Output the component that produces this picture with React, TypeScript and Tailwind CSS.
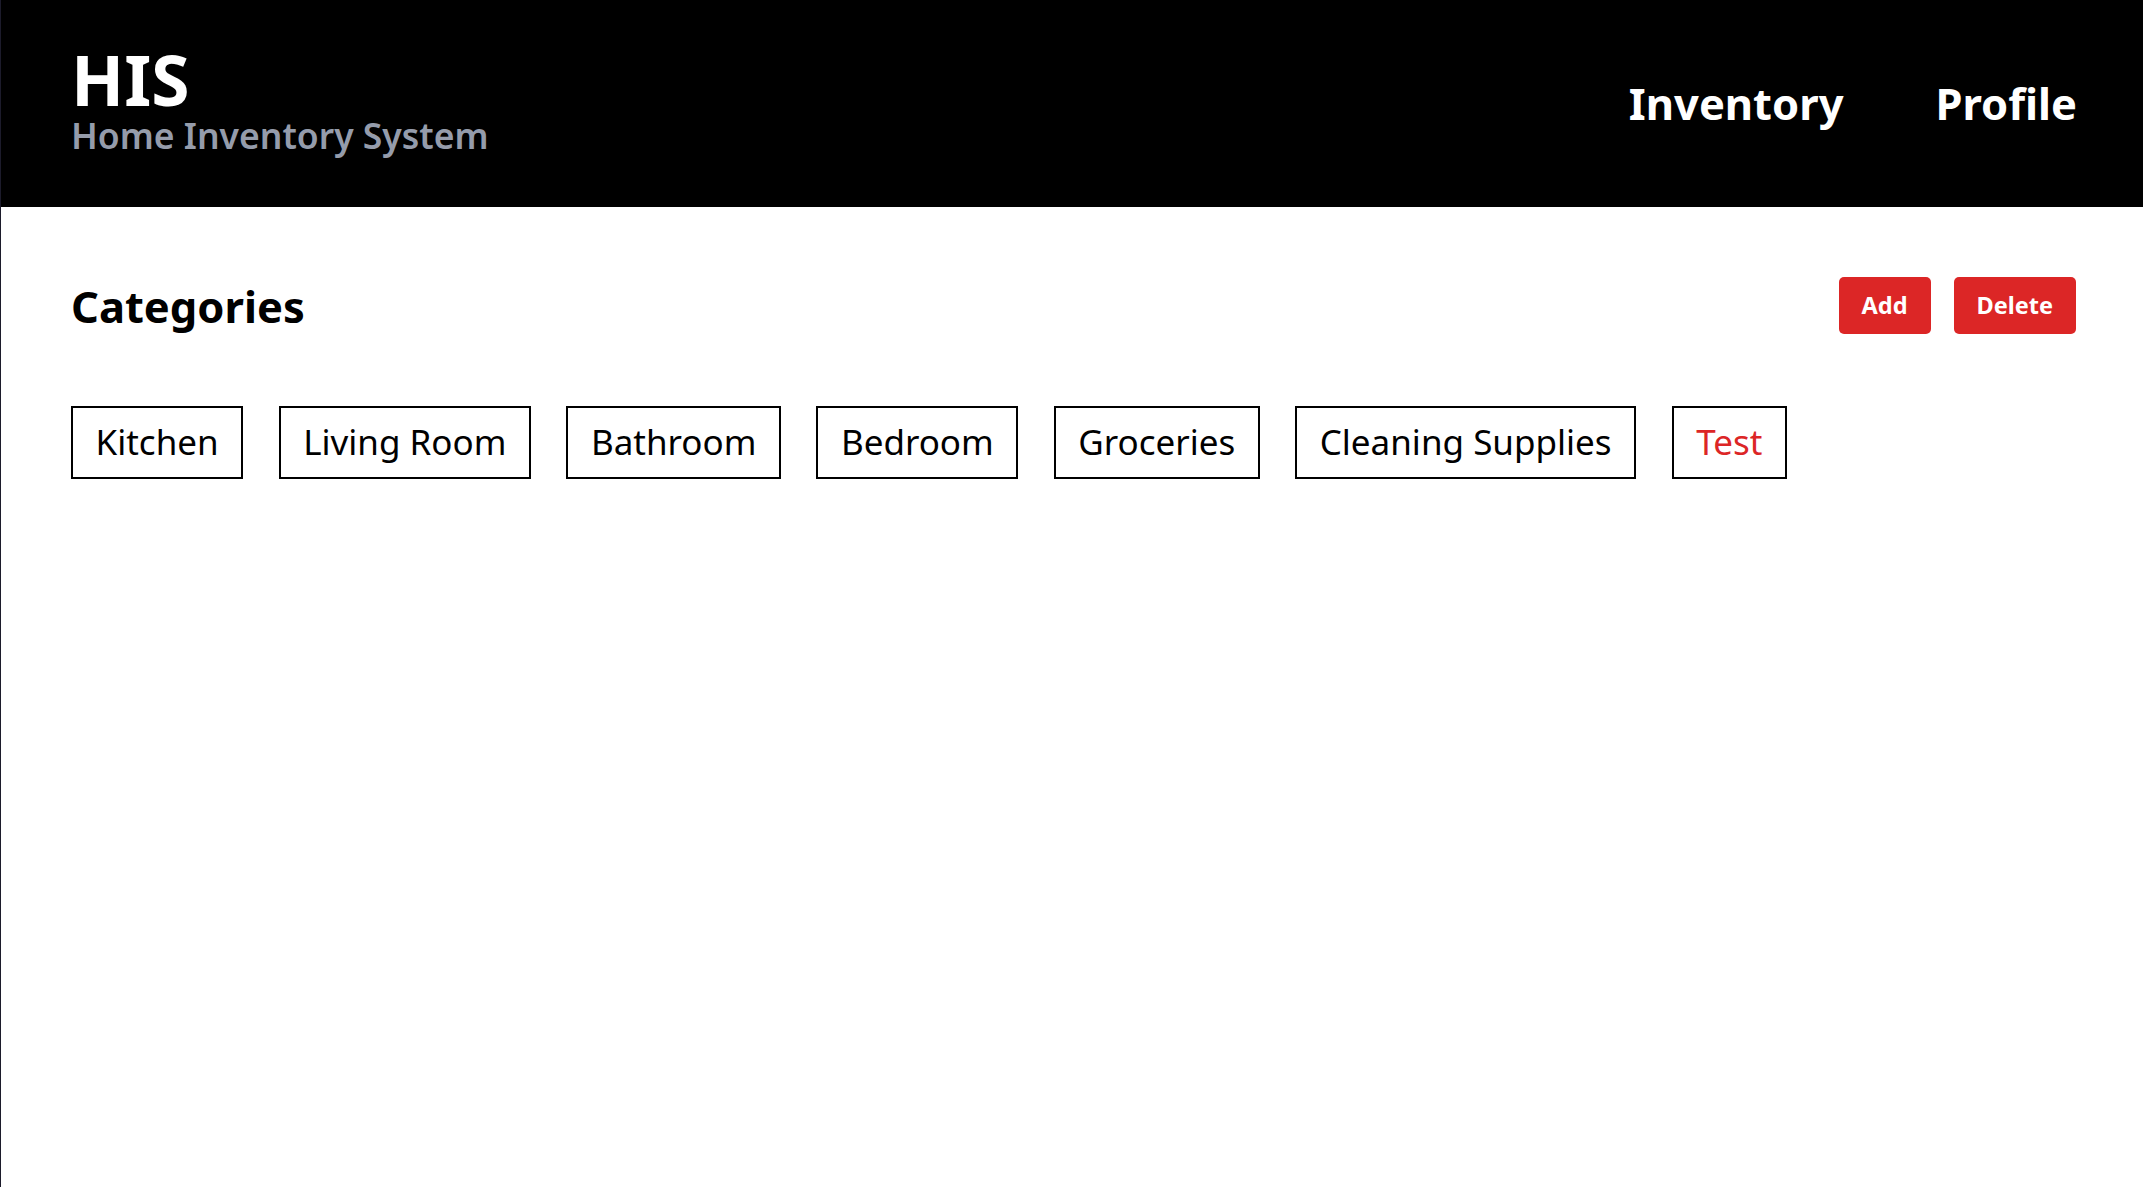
import React from "react";

const categories = [
  "Kitchen",
  "Living Room",
  "Bathroom",
  "Bedroom",
  "Groceries",
  "Cleaning Supplies",
];

export default function App() {
  return (
    <div
      className="min-h-screen w-full bg-white border-l border-[#1c1b2b]"
      style={{ fontFamily: '"Noto Sans", "Open Sans", sans-serif' }}
    >
      <header className="h-[207px] bg-black flex items-start justify-between pl-[70px] pr-[66px]">
        <div className="flex flex-col pt-[45px]">
          <h1 className="text-[69.5px] leading-[68px] font-bold text-white">HIS</h1>
          <p className="mt-[2px] text-[35.5px] leading-[40px] font-semibold text-[#959cab]">
            Home Inventory System
          </p>
        </div>
        <nav className="flex items-start gap-[92px] pt-[82px]">
          <a className="text-[43.5px] leading-none font-bold text-white">Inventory</a>
          <a className="text-[43.5px] leading-none font-bold text-white">Profile</a>
        </nav>
      </header>
      <main className="pl-[70px] pr-[67px] pt-[70px]">
        <div className="flex items-start justify-between">
          <h2 className="mt-[8px] text-[43.5px] leading-none font-bold text-black">Categories</h2>
          <div className="flex gap-[23px]">
            <button className="h-[57px] px-[23px] rounded-[5px] bg-[#dc2626] text-white text-[23.5px] font-bold">
              Add
            </button>
            <button className="h-[57px] px-[23px] rounded-[5px] bg-[#dc2626] text-white text-[23.5px] font-bold">
              Delete
            </button>
          </div>
        </div>
        <div className="flex flex-wrap gap-[35.5px] mt-[72px]">
          {categories.map((c) => (
            <div
              key={c}
              className="border-2 border-black px-[22.5px] h-[73px] flex items-center text-[35px] text-black"
            >
              {c}
            </div>
          ))}
          <div className="border-2 border-black px-[22.5px] h-[73px] flex items-center text-[35px] text-[#dc2626]">
            Test
          </div>
        </div>
      </main>
    </div>
  );
}
